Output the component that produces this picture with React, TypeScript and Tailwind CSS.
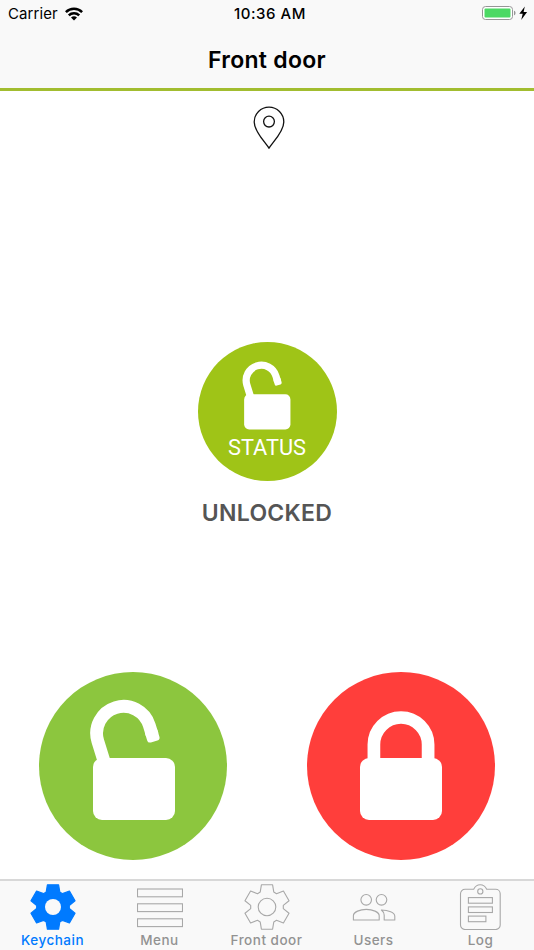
import React from 'react';

// Six-toothed cog, built by rotating one tooth around the centre
const TOOTH = [[-6.8, -14.9], [-5.6, -22.2], [5.6, -22.2], [6.8, -14.9]];
const GEAR_POINTS = Array.from({ length: 6 }, (_, i) => {
  const a = (i * Math.PI) / 3;
  return TOOTH.map(([x, y]) => {
    const px = 23 + x * Math.cos(a) - y * Math.sin(a);
    const py = 23 + x * Math.sin(a) + y * Math.cos(a);
    return `${px.toFixed(2)},${py.toFixed(2)}`;
  }).join(' ');
}).join(' ');

const GearIcon: React.FC<{ solid?: boolean }> = ({ solid }) => (
  <svg width="46" height="46" viewBox="0 0 46 46" strokeLinejoin="round">
    <polygon points={GEAR_POINTS} fill={solid ? '#007aff' : 'none'} stroke={solid ? '#007aff' : '#a8a8a8'} strokeWidth={solid ? 1.2 : 1.1} />
    <circle cx="23" cy="23" r={solid ? 8 : 8.8} fill={solid ? '#f9f9f9' : 'none'} stroke={solid ? 'none' : '#a8a8a8'} strokeWidth="1.1" />
  </svg>
);

const MenuIcon: React.FC = () => (
  <svg width="46" height="46" viewBox="0 0 46 46" fill="none" stroke="#a8a8a8" strokeWidth="1.1">
    <rect x="0.5" y="5" width="45" height="7.8" />
    <rect x="0.5" y="19.8" width="45" height="7.8" />
    <rect x="0.5" y="34.8" width="45" height="7.8" />
  </svg>
);

const UsersIcon: React.FC = () => (
  <svg width="46" height="46" viewBox="0 0 46 46" fill="none" stroke="#a8a8a8" strokeWidth="1.1" strokeLinejoin="round">
    <circle cx="15.2" cy="15.8" r="5.3" />
    <circle cx="30.5" cy="15.8" r="5.3" />
    <path d="M2.4 36v-4.3c0-3.8 6.8-6.3 12.9-6.3s12.9 2.5 12.9 6.3V36z" />
    <path d="M30.4 26c6.8.2 13.4 2.7 13.4 6.2V36H33.2v-4.8c0-2.4-1.2-4-2.8-5.2z" />
  </svg>
);

const LogIcon: React.FC = () => (
  <svg width="46" height="46" viewBox="0 0 46 46" fill="none" stroke="#a8a8a8" strokeWidth="1.1">
    <path d="M7 5.3h8.7c1.3-2.7 3.6-4.5 6.5-4.5s5.2 1.8 6.5 4.5h9A4.5 4.5 0 0 1 42.2 9.8V41a4.5 4.5 0 0 1-4.5 4.5H7A4.5 4.5 0 0 1 2.5 41V9.8A4.5 4.5 0 0 1 7 5.3z" />
    <circle cx="22.3" cy="7.4" r="2.6" />
    <rect x="10.4" y="13.6" width="24" height="5.6" />
    <rect x="10.4" y="22.9" width="24" height="5.6" />
    <rect x="10.4" y="32.1" width="17.5" height="5.6" />
  </svg>
);

const OpenLock: React.FC<{ className: string }> = ({ className }) => (
  <svg className={className} viewBox="0 0 85 122">
    <path d="M14.2 66 6.8 42.2A26.9 26.9 0 1 1 58.3 26.4l3 9.8" fill="none" stroke="#fff" strokeWidth="12.8" />
    <rect x="-6.4" y="-9" width="12.8" height="13" rx="3" fill="#fff" transform="translate(62 38.6) rotate(-17)" />
    <rect x="2" y="59" width="82" height="62" rx="9" fill="#fff" />
  </svg>
);

const ClosedLock: React.FC<{ className: string }> = ({ className }) => (
  <svg className={className} viewBox="0 0 82 109">
    <path d="M13.9 52V33.6a27.1 27.1 0 0 1 54.2 0V52" fill="none" stroke="#fff" strokeWidth="12.7" />
    <rect y="47" width="82" height="62" rx="9" fill="#fff" />
  </svg>
);

const tabs = [
  { label: 'Keychain', icon: <GearIcon solid />, active: true },
  { label: 'Menu', icon: <MenuIcon /> },
  { label: 'Front door', icon: <GearIcon /> },
  { label: 'Users', icon: <UsersIcon /> },
  { label: 'Log', icon: <LogIcon /> },
];

export default function App() {
  return (
    <div className="flex h-[950px] w-[534px] flex-col overflow-hidden bg-white font-['Inter',sans-serif]">
      <header className="h-[91px] shrink-0 border-b-[3px] border-[#a2bd30] bg-[#f9f9f9] text-black">
        <div className="grid h-7 grid-cols-3 items-center px-2 text-[15px]">
          <div className="flex items-center gap-[7px]">
            <span className="tracking-[0.1px]">Carrier</span>
            <svg width="18" height="14" viewBox="0 0 18 14" fill="none" stroke="#000" strokeWidth="2.5">
              <path d="M.9 5.1a11.6 11.6 0 0 1 16.2 0" />
              <path d="M3.8 8.3a7.4 7.4 0 0 1 10.4 0" />
              <path d="M9 13.5 6 10.6a4.4 4.4 0 0 1 6 0z" fill="#000" stroke="none" />
            </svg>
          </div>
          <span className="pl-[6px] text-center font-medium tracking-[0.55px] whitespace-nowrap">10:36 AM</span>
          <svg className="-mr-1 justify-self-end" width="48" height="16" viewBox="0 0 48 16">
            <rect x="0.5" y="0.5" width="30" height="13" rx="3" fill="#fff" stroke="#969696" />
            <rect x="2.5" y="2.5" width="26" height="9" rx="1" fill="#4cd964" />
            <path d="M32 4.8c2 .5 2 4 0 4.5z" fill="#969696" />
            <path d="M42.8.5l-5.5 7.2h3.4L39.2 13.9l5.9-7.8h-3.5z" fill="#000" />
          </svg>
        </div>
        <h1 className="flex h-16 items-center justify-center text-[23px] font-semibold tracking-[0.3px]">Front door</h1>
      </header>

      <main className="flex flex-1 flex-col items-center">
        <svg className="mt-[15px] ml-[3px]" width="32" height="44" viewBox="0 0 32 44" fill="none" stroke="#111" strokeWidth="1.3" strokeLinejoin="round">
          <path d="M16 42.3C13.5 37.5 1.2 26 1.2 15.9a14.8 14.8 0 0 1 29.6 0C30.8 26 18.5 37.5 16 42.3z" />
          <circle cx="16" cy="15.6" r="5.4" />
        </svg>

        <div className="mt-[192px] flex h-[139px] w-[139px] flex-col items-center rounded-full bg-[#9fc417] pt-[19px]">
          <OpenLock className="h-[69px] w-[48px] overflow-visible" />
          <span className="mt-[4px] font-['Roboto',sans-serif] text-[21.8px] leading-7 text-white">STATUS</span>
        </div>
        <p className="mt-4 text-[23px] leading-8 font-semibold tracking-[0.3px] text-[#555]">UNLOCKED</p>

        <div className="mt-[143px] flex w-full justify-between px-[39px]">
          <button className="flex h-[188px] w-[188px] justify-center rounded-full bg-[#8cc63e] pt-[27px]">
            <OpenLock className="h-[122px] w-[85px] overflow-visible" />
          </button>
          <button className="flex h-[188px] w-[188px] justify-center rounded-full bg-[#ff3e3b] pt-[39px]">
            <ClosedLock className="h-[109px] w-[82px]" />
          </button>
        </div>
      </main>

      <nav className="-ml-px flex h-[71px] w-[535px] shrink-0 border-t-2 border-[#d8d8d8] bg-[#f9f9f9]">
        {tabs.map((tab) => (
          <button
            key={tab.label}
            className={`flex flex-1 flex-col items-center pt-[3px] text-[13.5px] leading-5 font-medium tracking-[0.5px] ${tab.active ? 'text-[#007aff]' : 'text-[#929292]'}`}
          >
            {tab.icon}
            <span className="whitespace-nowrap">{tab.label}</span>
          </button>
        ))}
      </nav>
    </div>
  );
}
